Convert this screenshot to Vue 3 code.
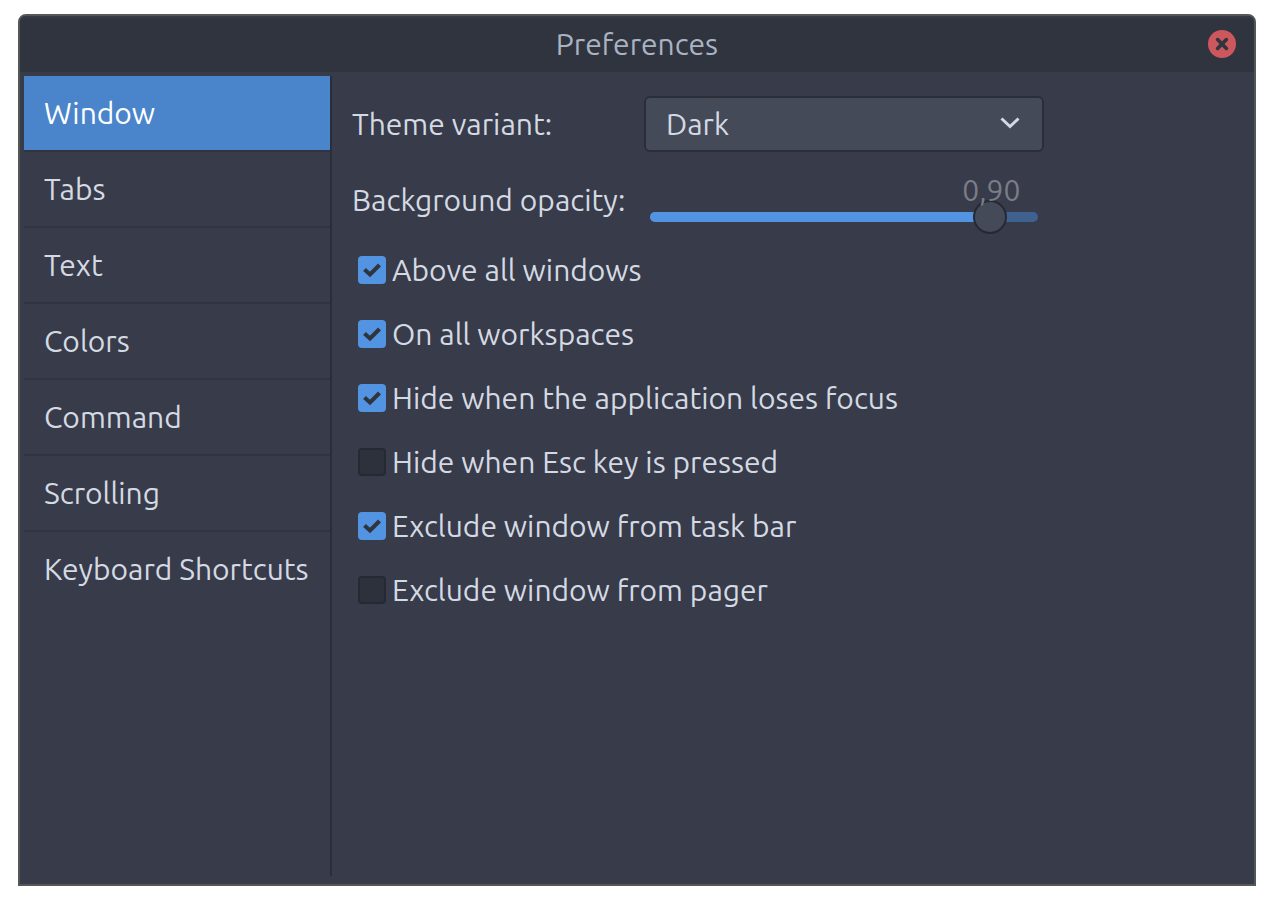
<script setup>
import { computed, ref } from 'vue'

const pages = ['Window', 'Tabs', 'Text', 'Colors', 'Command', 'Scrolling', 'Keyboard Shortcuts']
const current = ref('Window')
const variant = ref('Dark')
const opacity = ref(0.9)
const options = ref([
  { id: 'above', label: 'Above all windows', on: true },
  { id: 'workspaces', label: 'On all workspaces', on: true },
  { id: 'focus', label: 'Hide when the application loses focus', on: true },
  { id: 'esc', label: 'Hide when Esc key is pressed', on: false },
  { id: 'taskbar', label: 'Exclude window from task bar', on: true },
  { id: 'pager', label: 'Exclude window from pager', on: false },
])
const opacityText = computed(() => Number(opacity.value).toFixed(2).replace('.', ','))
const percent = computed(() => opacity.value * 100 + '%')
</script>

<template>
  <div class="desktop">
    <main class="dialog">
      <header class="titlebar">
        <h1>Preferences</h1>
        <button class="close" type="button" aria-label="Close">
          <svg viewBox="0 0 28 28" aria-hidden="true">
            <path d="M9.6 9.6L18.4 18.4M18.4 9.6L9.6 18.4" />
          </svg>
        </button>
      </header>
      <div class="body">
        <nav class="sidebar">
          <button
            v-for="page in pages"
            :key="page"
            type="button"
            :class="{ active: page === current }"
            @click="current = page"
          >{{ page }}</button>
        </nav>
        <section class="content">
          <div class="fields">
            <label for="variant">Theme variant:</label>
            <div class="combo">
              <select id="variant" v-model="variant">
                <option>Dark</option>
                <option>Light</option>
              </select>
              <svg viewBox="0 0 20 12" aria-hidden="true"><path d="M1.5 1.5L10 9.5L18.5 1.5" /></svg>
            </div>
            <label for="opacity">Background opacity:</label>
            <div class="scale">
              <div class="rail"><div class="fill" :style="{ width: percent }"></div></div>
              <input id="opacity" v-model="opacity" type="range" min="0" max="1" step="0.01" />
              <div class="travel">
                <output for="opacity" :style="{ left: percent }">{{ opacityText }}</output>
              </div>
            </div>
          </div>
          <div class="checks">
            <label v-for="option in options" :key="option.id" class="check" :for="option.id">
              <span class="box">
                <input :id="option.id" v-model="option.on" type="checkbox" />
                <svg v-if="option.on" viewBox="0 0 28 28" aria-hidden="true">
                  <path d="M6.5 13.5L12 18.5L21.5 9" />
                </svg>
              </span>
              <span>{{ option.label }}</span>
            </label>
          </div>
        </section>
      </div>
    </main>
  </div>
</template>

<style>
body {
  margin: 0;
  background: #ffffff;
}
</style>

<style scoped>
.desktop {
  box-sizing: border-box;
  min-height: 100vh;
  padding: 14px 18px 18px;
  display: flex;
  font-family: Ubuntu, "Noto Sans", sans-serif;
  font-size: 30px;
  line-height: 40px;
  color: #d3dae3;
}
.dialog {
  flex: 1;
  min-width: 0;
  display: flex;
  flex-direction: column;
  border: 2px solid #555656;
  border-radius: 8px 8px 0 0;
  background: #383b49;
}
button,
select {
  font: inherit;
  color: inherit;
}
.titlebar {
  box-sizing: border-box;
  height: 56px;
  padding: 0 18px;
  display: grid;
  grid-template-columns: 28px 1fr 28px;
  align-items: center;
  border-radius: 6px 6px 0 0;
  background: #30343f;
  box-shadow: inset 0 2px #363a47;
}
.titlebar h1 {
  grid-column: 2;
  margin: 0;
  font: inherit;
  text-align: center;
  color: #a9b3c2;
}
.close {
  width: 28px;
  height: 28px;
  padding: 0;
  border: 0;
  border-radius: 50%;
  background: #cc575d;
}
.close svg {
  display: block;
  fill: none;
  stroke: #2f343f;
  stroke-width: 3.6;
  stroke-linecap: round;
}
.body {
  flex: 1;
  display: flex;
  padding: 4px 4px 8px;
}
.sidebar {
  flex: none;
  width: 306px;
  display: flex;
  flex-direction: column;
  border-right: 2px solid #2b2e39;
}
.sidebar button {
  height: 76px;
  padding: 0 20px;
  border: 0;
  border-bottom: 2px solid #313440;
  background: transparent;
  text-align: left;
  white-space: nowrap;
}
.sidebar button:last-child {
  border-bottom-color: transparent;
}
.sidebar .active {
  background: #4a85cb;
  color: #ffffff;
}
.content {
  flex: 1;
  min-width: 0;
  padding: 20px;
}
.fields {
  display: grid;
  grid-template-columns: 292px 400px;
  grid-template-rows: 56px 72px;
  row-gap: 12px;
  align-items: center;
}
.combo {
  position: relative;
}
.combo select {
  appearance: none;
  box-sizing: border-box;
  width: 100%;
  height: 56px;
  padding: 0 60px 0 20px;
  display: block;
  border: 2px solid #2b2e39;
  border-radius: 6px;
  background: #444a58;
}
.combo svg {
  position: absolute;
  right: 24px;
  top: 21px;
  width: 20px;
  height: 12px;
  fill: none;
  stroke: #d3dae3;
  stroke-width: 3;
  pointer-events: none;
}
.scale {
  position: relative;
  height: 72px;
  display: flex;
  align-items: flex-end;
}
.rail {
  position: absolute;
  left: 6px;
  right: 6px;
  bottom: 14px;
  height: 10px;
  border-radius: 5px;
  background: #3f618f;
  overflow: hidden;
}
.fill {
  height: 100%;
  background: #5294e2;
}
.scale input {
  appearance: none;
  position: relative;
  width: 100%;
  height: 34px;
  margin: 0 0 2px;
  background: transparent;
}
.scale input::-webkit-slider-thumb {
  appearance: none;
  box-sizing: border-box;
  width: 34px;
  height: 34px;
  border: 2px solid #262933;
  border-radius: 50%;
  background: #444a58;
}
.travel {
  position: absolute;
  top: 6px;
  left: 18px;
  right: 16px;
  pointer-events: none;
}
.travel output {
  position: absolute;
  transform: translateX(-50%);
  color: #797d87;
}
.checks {
  margin-top: 12px;
  display: flex;
  flex-direction: column;
  align-items: flex-start;
  gap: 20px;
}
.check {
  height: 44px;
  padding-left: 6px;
  display: flex;
  align-items: center;
  gap: 6px;
}
.box {
  position: relative;
  width: 28px;
  height: 28px;
}
.box input {
  appearance: none;
  box-sizing: border-box;
  display: block;
  width: 28px;
  height: 28px;
  margin: 0;
  border: 2px solid #262933;
  border-radius: 4px;
  background: #2d313b;
}
.box input:checked {
  border-color: #5294e2;
  background: #5294e2;
}
.box svg {
  position: absolute;
  inset: 0;
  fill: none;
  stroke: #2f343f;
  stroke-width: 4;
  pointer-events: none;
}
</style>
